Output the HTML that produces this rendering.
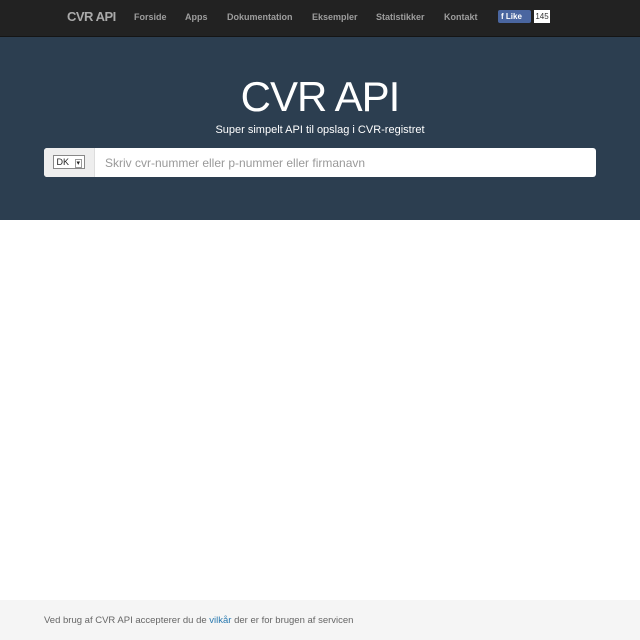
<!DOCTYPE html>
<html><head><meta charset="utf-8"><style>
body{margin:0;width:640px;height:640px;position:relative;font-family:"Liberation Sans",sans-serif;background:#fff;overflow:hidden}
.nav{position:absolute;top:0;left:0;width:640px;height:36px;background:#222;border-bottom:1px solid #151515}
.nav span{position:absolute;top:12px;font-size:9px;color:#9d9d9d;font-weight:bold}
.brand{font-size:13px!important;top:9px!important;color:#aaa!important;letter-spacing:-0.5px}
.hero{position:absolute;top:37px;left:0;width:640px;height:183px;background:#2c3e50;text-align:center;color:#fff}
h1{margin:0;position:absolute;top:36px;width:100%;font-weight:normal;font-size:42px;letter-spacing:-1px}
.sub{position:absolute;top:87px;width:100%;font-size:11px}
.search{position:absolute;left:44px;top:111px;width:552px;height:29px;background:#fff;border-radius:3px;text-align:left}
.add{position:absolute;left:0;top:0;width:50px;height:29px;background:#eee;border-right:1px solid #ddd;border-radius:3px 0 0 3px}
.sel{position:absolute;left:9px;top:7px;width:30px;height:12px;border:1px solid #888;background:#fff;font-size:9px;line-height:12px;color:#222}
.ph{position:absolute;left:61px;top:8px;font-size:12px;color:#999}
.foot{position:absolute;top:600px;left:0;width:640px;height:40px;background:#f5f5f5;font-size:9.5px;color:#666}
</style></head><body>
<div class="nav">
<span class="brand" style="left:67px">CVR API</span>
<span style="left:134px">Forside</span>
<span style="left:185px">Apps</span>
<span style="left:227px">Dokumentation</span>
<span style="left:312px">Eksempler</span>
<span style="left:376px">Statistikker</span>
<span style="left:444px">Kontakt</span>
<div style="position:absolute;left:498px;top:10px;width:33px;height:13px;background:#4a66a0;color:#fff;font-size:8px;font-weight:bold;line-height:13px;border-radius:2px"><span style="position:static;color:#fff;font-size:8px;padding-left:3px">f Like</span></div>
<div style="position:absolute;left:534px;top:10px;width:16px;height:13px;background:#fff;font-size:8px;line-height:13px;color:#333;text-align:center">145</div>
</div>
<div class="hero">
<h1>CVR API</h1>
<div class="sub">Super simpelt API til opslag i CVR-registret</div>
<div class="search"><div class="add"><div class="sel">&nbsp;DK <span style="font-size:7px;border:1px solid #999;padding:0 1px;margin-left:3px">▾</span></div></div><div class="ph">Skriv cvr-nummer eller p-nummer eller firmanavn</div></div>
</div>
<div class="foot"><div style="position:absolute;left:44px;top:15px">Ved brug af CVR API accepterer du de <span style="color:#2a7ab0">vilkår</span> der er for brugen af servicen</div></div>
</body></html>
